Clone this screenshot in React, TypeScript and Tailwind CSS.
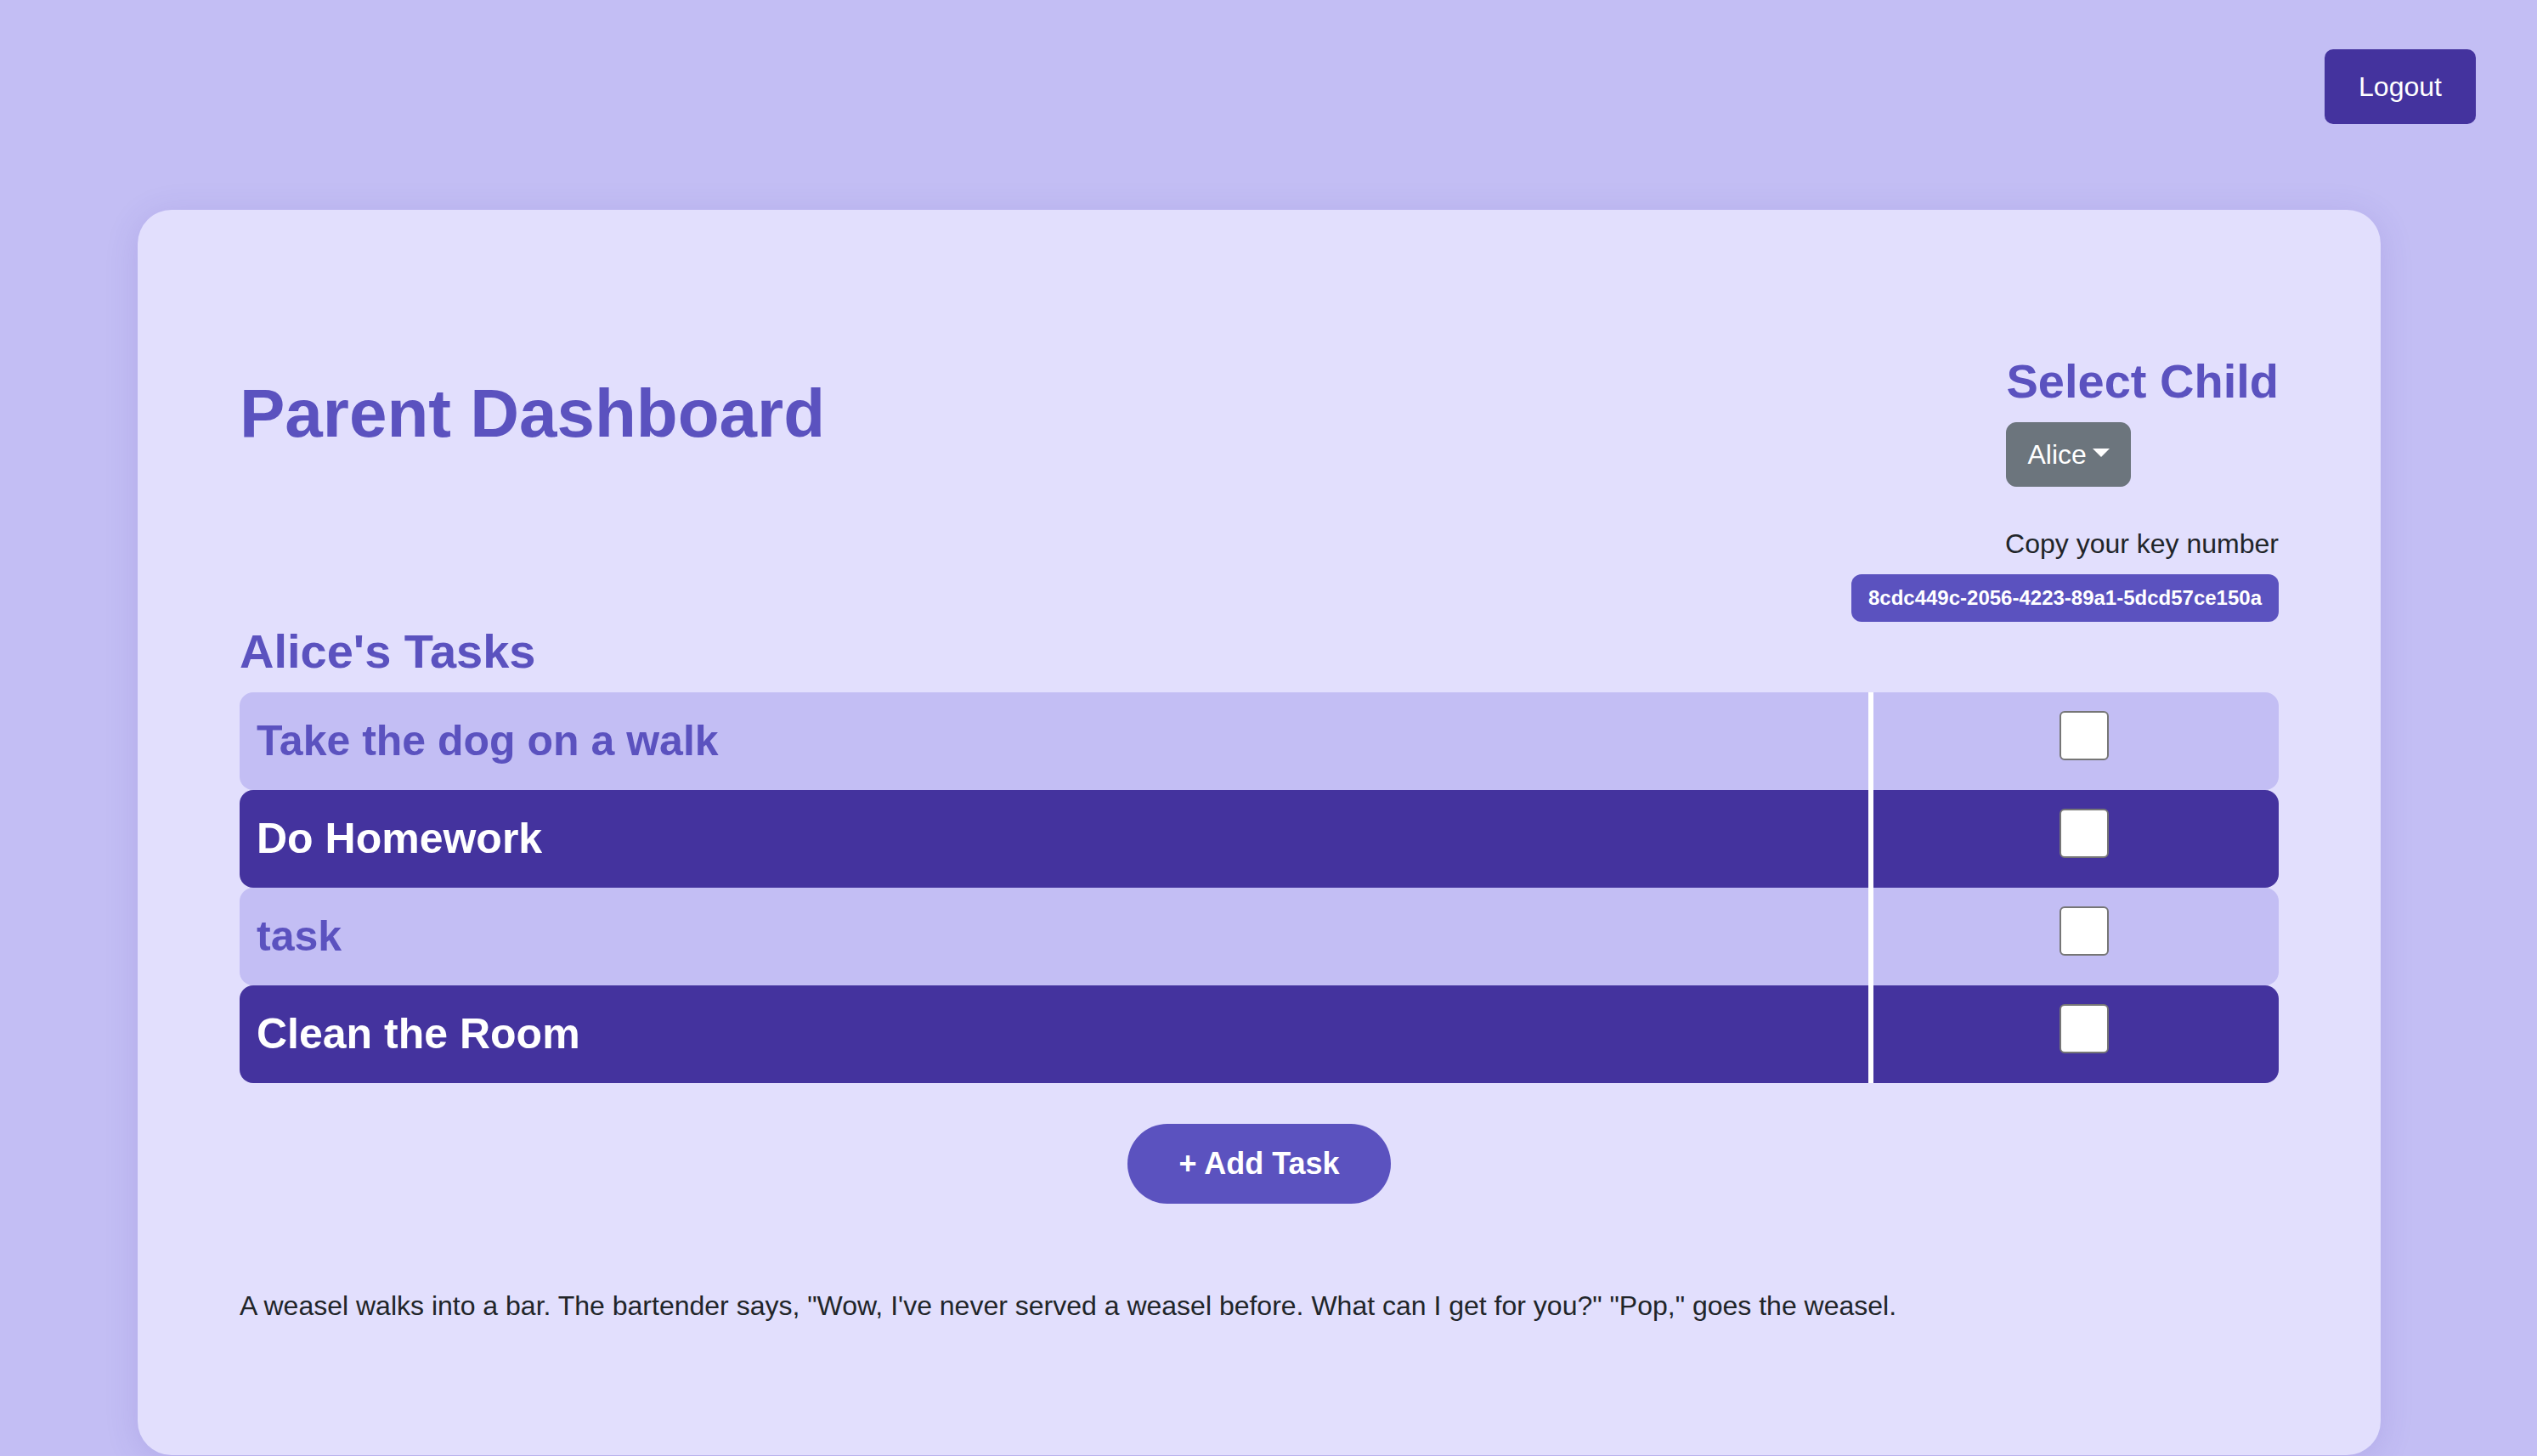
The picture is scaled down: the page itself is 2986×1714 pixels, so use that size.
import React, { useState } from 'react';

type Task = { id: number; title: string };

const tasks: Task[] = [
  { id: 1, title: 'Take the dog on a walk' },
  { id: 2, title: 'Do Homework' },
  { id: 3, title: 'task' },
  { id: 4, title: 'Clean the Room' },
];

const App: React.FC = () => {
  const [done, setDone] = useState<Record<number, boolean>>({});

  const toggle = (id: number) => {
    setDone((prev) => ({ ...prev, [id]: !prev[id] }));
  };

  return (
    <div className="min-h-screen bg-[#C3BEF4] font-['Liberation_Sans',Arial,Helvetica,sans-serif] overflow-hidden">
      <div className="flex justify-end pt-[58px] pr-[72px]">
        <button className="w-[178px] h-[88px] bg-[#44339E] text-white text-[32px] leading-[48px] rounded-[10px]">
          Logout
        </button>
      </div>

      <div className="ml-[162px] mr-[184px] mt-[101px] bg-[#E2DFFD] rounded-[40px] shadow-[0_6px_40px_rgba(70,50,170,0.14)] px-[120px] pt-[168px] pb-[152px]">
        <div className="flex justify-between items-start">
          <h1 className="mt-[24px] text-[80px] leading-[96px] font-bold text-[#5B52BF]">
            Parent Dashboard
          </h1>

          <div className="flex flex-col items-end">
            <div className="flex flex-col items-start">
              <h3 className="text-[56px] leading-[67px] font-bold text-[#5B52BF] mb-[15px]">
                Select Child
              </h3>
              <button className="h-[76px] px-[24px] flex items-center bg-[#6C757D] border border-[#6C757D] rounded-[12px] text-white text-[32px] leading-[48px]">
                Alice
                <span className="ml-[7px] mt-[-4px] w-0 h-0 border-t-[10px] border-t-white border-x-[10px] border-x-transparent" />
              </button>
            </div>
            <p className="mt-[43px] text-[32px] leading-[48px] text-[#212529]">
              Copy your key number
            </p>
            <span className="mt-[12px] h-[56px] px-[20px] flex items-center bg-[#5B52BF] rounded-[12px] text-white text-[24px] font-bold">
              8cdc449c-2056-4223-89a1-5dcd57ce150a
            </span>
          </div>
        </div>

        <h3 className="mt-[1px] mb-[15px] text-[56px] leading-[67px] font-bold text-[#5B52BF]">
          Alice's Tasks
        </h3>

        <div className="flex flex-col">
          {tasks.map((task, i) => {
            const dark = i % 2 === 1;
            return (
              <div
                key={task.id}
                className={
                  dark
                    ? 'flex h-[115px] rounded-[16px] bg-[#44339E] text-white'
                    : 'flex h-[115px] rounded-[16px] bg-[#C3BEF4] text-[#5B52BF]'
                }
              >
                <div className="flex-1 flex items-center pl-[20px] border-r-[6px] border-white text-[50px] font-bold">
                  {task.title}
                </div>
                <div className="w-[477px] pl-[219px] pt-[22px]">
                  <input
                    type="checkbox"
                    checked={!!done[task.id]}
                    onChange={() => toggle(task.id)}
                    className="appearance-none block w-[58px] h-[58px] bg-white border-2 border-[#767676] rounded-[6px]"
                  />
                </div>
              </div>
            );
          })}
        </div>

        <div className="flex justify-center mt-[48px]">
          <button className="w-[310px] h-[94px] rounded-full bg-[#5B52BF] text-white text-[36px] font-bold">
            + Add Task
          </button>
        </div>

        <p className="mt-[96px] text-[32px] leading-[48px] text-[#212529]">
          A weasel walks into a bar. The bartender says, "Wow, I've never served a weasel before. What can I get for you?" "Pop," goes the weasel.
        </p>
      </div>
    </div>
  );
};

export default App;
